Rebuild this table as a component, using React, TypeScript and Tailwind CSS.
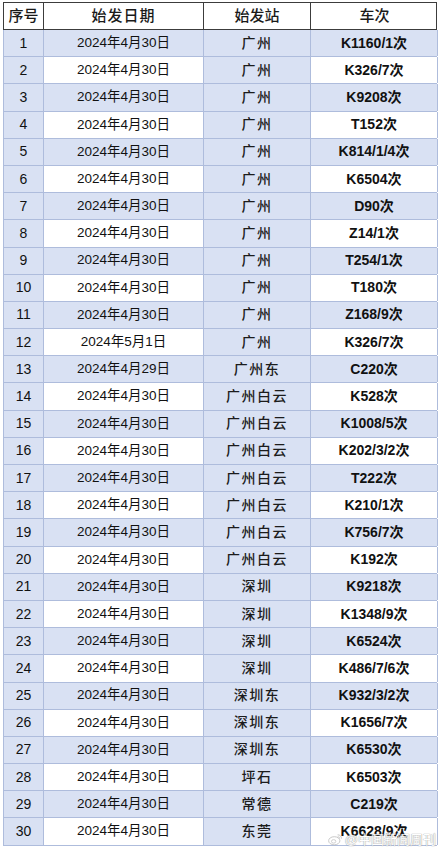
import React from "react";

type Row = [number, string, string, string];

const rows: Row[] = [
  [1, "2024年4月30日", "广州", "K1160/1次"],
  [2, "2024年4月30日", "广州", "K326/7次"],
  [3, "2024年4月30日", "广州", "K9208次"],
  [4, "2024年4月30日", "广州", "T152次"],
  [5, "2024年4月30日", "广州", "K814/1/4次"],
  [6, "2024年4月30日", "广州", "K6504次"],
  [7, "2024年4月30日", "广州", "D90次"],
  [8, "2024年4月30日", "广州", "Z14/1次"],
  [9, "2024年4月30日", "广州", "T254/1次"],
  [10, "2024年4月30日", "广州", "T180次"],
  [11, "2024年4月30日", "广州", "Z168/9次"],
  [12, "2024年5月1日", "广州", "K326/7次"],
  [13, "2024年4月29日", "广州东", "C220次"],
  [14, "2024年4月30日", "广州白云", "K528次"],
  [15, "2024年4月30日", "广州白云", "K1008/5次"],
  [16, "2024年4月30日", "广州白云", "K202/3/2次"],
  [17, "2024年4月30日", "广州白云", "T222次"],
  [18, "2024年4月30日", "广州白云", "K210/1次"],
  [19, "2024年4月30日", "广州白云", "K756/7次"],
  [20, "2024年4月30日", "广州白云", "K192次"],
  [21, "2024年4月30日", "深圳", "K9218次"],
  [22, "2024年4月30日", "深圳", "K1348/9次"],
  [23, "2024年4月30日", "深圳", "K6524次"],
  [24, "2024年4月30日", "深圳", "K486/7/6次"],
  [25, "2024年4月30日", "深圳东", "K932/3/2次"],
  [26, "2024年4月30日", "深圳东", "K1656/7次"],
  [27, "2024年4月30日", "深圳东", "K6530次"],
  [28, "2024年4月30日", "坪石", "K6503次"],
  [29, "2024年4月30日", "常德", "C219次"],
  [30, "2024年4月30日", "东莞", "K6628/9次"],
];

const font = { fontFamily: '"Liberation Sans", "Noto Sans CJK SC", sans-serif' };

export default function App() {
  return (
    <div className="relative w-[440px] h-[847px] overflow-hidden bg-white" style={font}>
      <div className="ml-[3px] mt-[2px] w-[434px]">
        <div className="grid grid-cols-[40px_160px_107px_127px] h-[28px] border border-[#3c3c3c] bg-white text-[15px] font-medium text-[#1a1a1a]">
          <div className="flex items-center justify-center border-r border-[#3c3c3c]">序号</div>
          <div className="flex items-center justify-center border-r border-[#3c3c3c] tracking-[1px]">始发日期</div>
          <div className="flex items-center justify-center border-r border-[#3c3c3c]">始发站</div>
          <div className="flex items-center justify-center">车次</div>
        </div>
        {rows.map(([n, date, station, train]) => {
          const alt = n % 2 === 1 ? "bg-[#d9e1f3]" : "bg-white";
          return (
            <div
              key={n}
              className="grid grid-cols-[40px_160px_107px_127px] h-[27.2px] border-l border-b border-[#aebcdc] text-[#111]"
            >
              <div className="flex items-center justify-center bg-[#d9e1f3] border-r border-[#aebcdc] text-[14px]">
                {n}
              </div>
              <div className={`flex items-center justify-center ${alt} border-r border-[#aebcdc] text-[13.5px]`}>
                {date}
              </div>
              <div className="flex items-center justify-center bg-[#d9e1f3] border-r border-[#aebcdc] text-[14px] font-medium text-[#1c1c1c] tracking-[1.5px]">
                {station}
              </div>
              <div className={`flex items-center justify-center ${alt} border-r border-[#aebcdc] text-[14px] font-bold`}>
                {train}
              </div>
            </div>
          );
        })}
      </div>
      <div className="absolute right-[4px] bottom-[1px] flex items-center gap-[2px] opacity-80">
        <svg width="15" height="13" viewBox="0 0 24 20" className="shrink-0">
          <ellipse cx="10" cy="12" rx="9" ry="6.5" fill="none" stroke="#bdbdbd" strokeWidth="1.6" />
          <ellipse cx="9" cy="13" rx="3.5" ry="2.8" fill="none" stroke="#bdbdbd" strokeWidth="1.4" />
          <path d="M16 2.5a5 5 0 0 1 5.5 5.5" fill="none" stroke="#bdbdbd" strokeWidth="1.6" strokeLinecap="round" />
          <path d="M16 5.5a2.2 2.2 0 0 1 2.5 2.5" fill="none" stroke="#bdbdbd" strokeWidth="1.4" strokeLinecap="round" />
        </svg>
        <span
          className="text-[13px] leading-none text-white"
          style={{ textShadow: "0 0 1px #8a8a8a, 0 0 1px #8a8a8a" }}
        >
          @中国新闻周刊
        </span>
      </div>
    </div>
  );
}
